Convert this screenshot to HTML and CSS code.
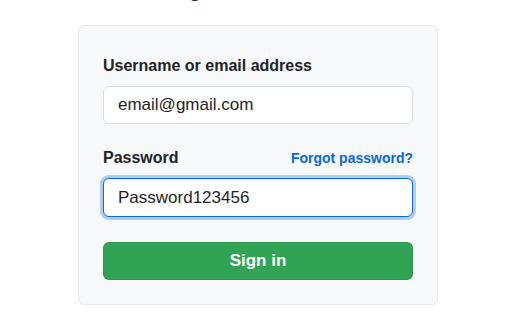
FILE: index.html
```html
<!DOCTYPE html>
<html lang="en">
<head>
<meta charset="utf-8">
<title>Sign in</title>
<link rel="stylesheet" href="styles.css">
</head>
<body>
<main class="page">
  <h1 class="title">Sign in to GitHub</h1>
  <form class="card">
    <label class="label" for="login">Username or email address</label>
    <input class="input" id="login" type="text" value="email@gmail.com">
    <div class="label-row">
      <label class="label" for="password">Password</label>
      <a class="forgot" href="#">Forgot password?</a>
    </div>
    <input class="input input-focus" id="password" type="text" value="Password123456">
    <button class="btn" type="button">Sign in</button>
  </form>
</main>
</body>
</html>
```

FILE: styles.css
```css
html, body {
  margin: 0;
  padding: 0;
  background: #ffffff;
  font-family: "Liberation Sans", Arial, sans-serif;
  color: #1f2328;
}
body {
  padding-left: 4px;
}
.page {
  width: 360px;
  margin: 0 auto;
}
.title {
  margin: -24px 0 25px;
  font-size: 24px;
  line-height: 24px;
  font-weight: 300;
  text-align: center;
  color: #1f2328;
}
.card {
  display: flex;
  flex-direction: column;
  background: #f6f8fa;
  border: 1px solid #e4e8ec;
  border-radius: 6px;
  padding: 28px 24px 24px;
}
.label {
  display: block;
  font-size: 16px;
  line-height: 24px;
  font-weight: 700;
  color: #1f2328;
  margin-bottom: 8px;
}
.label-row {
  display: flex;
  justify-content: space-between;
  align-items: baseline;
  margin-top: 22px;
}
.forgot {
  font-size: 14px;
  font-weight: 700;
  color: #0969da;
  text-decoration: none;
}
.input {
  box-sizing: border-box;
  height: 38px;
  width: 100%;
  padding: 0 14px;
  font-family: "Liberation Sans", Arial, sans-serif;
  font-size: 17px;
  color: #1f2328;
  background: #ffffff;
  border: 1px solid #d8dee4;
  border-radius: 6px;
  outline: none;
}
.input-focus {
  height: 39px;
  border-color: #0969da;
  box-shadow: 0 0 0 3px rgba(9, 105, 218, 0.3);
}
.btn {
  margin-top: 25px;
  height: 38px;
  width: 100%;
  border: 1px solid rgba(31, 35, 40, 0.1);
  border-radius: 6px;
  background: #31a354;
  color: #ffffff;
  font-family: "Liberation Sans", Arial, sans-serif;
  font-size: 17px;
  font-weight: 700;
}
```
